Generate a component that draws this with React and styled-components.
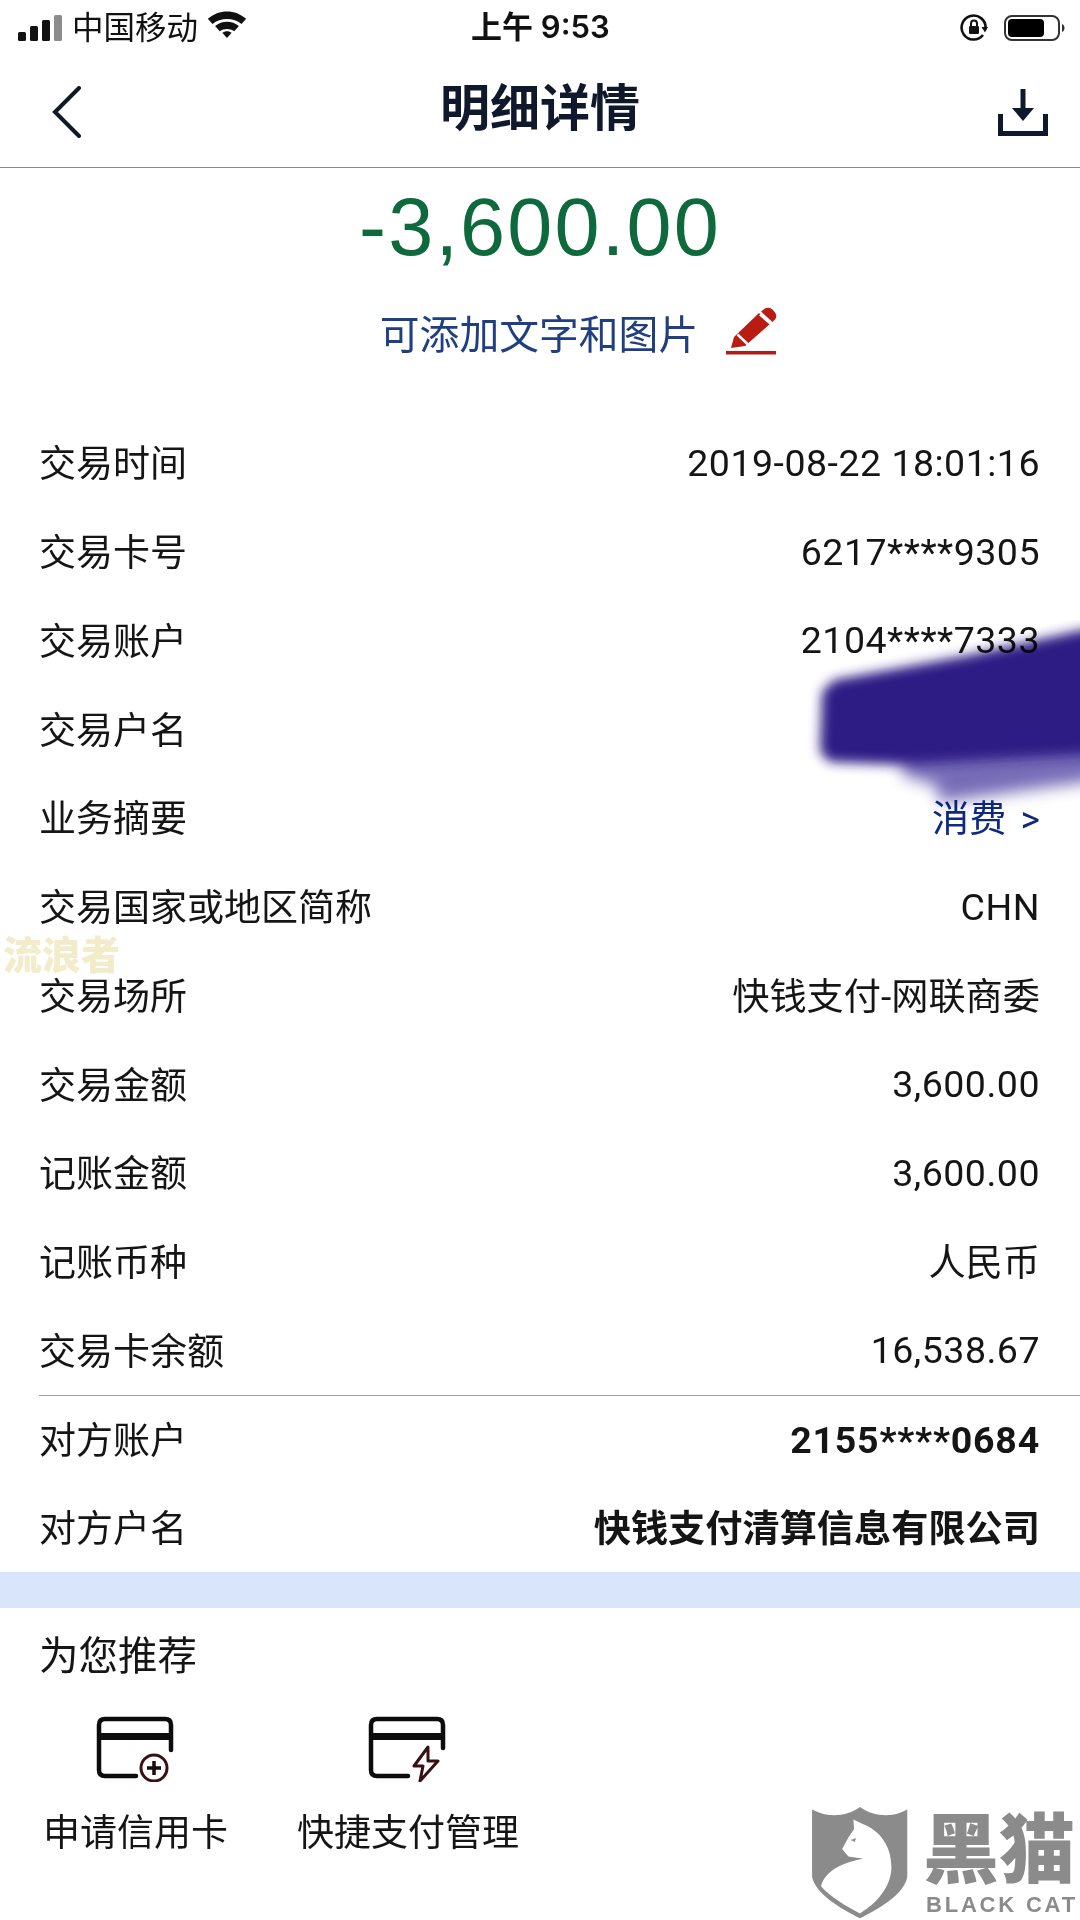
import styled, { createGlobalStyle } from "styled-components";

const GlobalStyle = createGlobalStyle`
  html, body {
    margin: 0;
    padding: 0;
    background: #fff;
  }
  body {
    font-family: "Inter", "Noto Sans CJK SC", sans-serif;
    color: #111;
  }
`;

const rows = [
  { label: "交易时间", value: "2019-08-22 18:01:16" },
  { label: "交易卡号", value: "6217****9305" },
  { label: "交易账户", value: "2104****7333" },
  { label: "交易户名", value: "" },
  { label: "业务摘要", value: "消费 >", kind: "link", cjk: true },
  { label: "交易国家或地区简称", value: "CHN" },
  { label: "交易场所", value: "快钱支付-网联商委", cjk: true },
  { label: "交易金额", value: "3,600.00" },
  { label: "记账金额", value: "3,600.00" },
  { label: "记账币种", value: "人民币", cjk: true },
  { label: "交易卡余额", value: "16,538.67" },
  { label: "对方账户", value: "2155****0684", kind: "strong", ruled: true },
  { label: "对方户名", value: "快钱支付清算信息有限公司", kind: "strong", cjk: true },
];

function SignalIcon() {
  return (
    <svg width="45" height="26" viewBox="0 0 45 26">
      <rect x="0" y="17" width="8" height="9" rx="1.5" fill="#111" />
      <rect x="12" y="11" width="8" height="15" rx="1.5" fill="#111" />
      <rect x="24" y="5" width="8" height="21" rx="1.5" fill="#111" />
      <rect x="36" y="0" width="8" height="26" rx="1.5" fill="#8c8c8c" />
    </svg>
  );
}

function WifiIcon() {
  return (
    <WifiSvg width="40" height="29" viewBox="0 0 38 28">
      <path d="M0.500 9.500C11 0 27 0 37.500 9.500L33 14.500C25.500 8 12.500 8 5 14.500Z" fill="#111" />
      <path d="M7.500 16.500C14 11 24 11 30.500 16.500L26 21.500C22 18.500 16 18.500 12 21.500Z" fill="#111" />
      <path d="M14.500 23C17 21 21 21 23.500 23L19 28Z" fill="#111" />
    </WifiSvg>
  );
}

function RotationLockIcon() {
  return (
    <svg width="28" height="28" viewBox="0 0 28 28">
      <path d="M23 21A12 12 0 1 1 25.600 14" fill="none" stroke="#111" strokeWidth="2.600" />
      <path d="M21.500 13H28L25 18.500Z" fill="#111" />
      <rect x="9" y="12" width="10" height="8" rx="1.200" fill="#111" />
      <path d="M11 12V9.500A3 3 0 0 1 17 9.500V12" fill="none" stroke="#111" strokeWidth="2" />
    </svg>
  );
}

function BatteryIcon() {
  return (
    <svg width="61" height="26" viewBox="0 0 61 26">
      <rect x="1" y="1" width="54" height="24" rx="7" fill="none" stroke="#333" strokeWidth="2" />
      <rect x="4" y="4" width="36" height="18" rx="4" fill="#000" />
      <path d="M58 9C60 10 60.500 11.500 60.500 13C60.500 14.500 60 16 58 17Z" fill="#333" />
    </svg>
  );
}

function BackIcon() {
  return (
    <svg width="30" height="52" viewBox="0 0 30 52">
      <path d="M27 2L3 26L27 50" fill="none" stroke="#10182c" strokeWidth="4" strokeLinecap="round" />
    </svg>
  );
}

function DownloadIcon() {
  return (
    <svg width="50" height="48" viewBox="0 0 50 48">
      <path d="M25 1V28" stroke="#10182c" strokeWidth="5" />
      <path d="M14 20L25 33L36 20Z" fill="#10182c" />
      <path d="M2.500 26V45.500H47.500V26" fill="none" stroke="#10182c" strokeWidth="5" />
    </svg>
  );
}

function PencilIcon() {
  return (
    <svg width="52" height="48" viewBox="0 0 52 48">
      <path d="M8 30L33 6L44 17L19 39L5 41Z" fill="#b81c12" />
      <path d="M37 3C40 0 44 0 47 3L49 5.500C51 8 50.500 11 48.500 13L46.500 15L35 4.500Z" fill="#b81c12" />
      <path d="M11.500 27.500L22.500 38" stroke="#fff" strokeWidth="2.500" />
      <path d="M34 7.500L45 17" stroke="#fff" strokeWidth="2.500" />
      <rect x="0" y="44" width="50" height="3.500" fill="#a8201a" />
    </svg>
  );
}

function CardAddIcon() {
  return (
    <svg width="80" height="66" viewBox="0 0 80 66">
      <path d="M75 34V9C75 5 73 3 69 3H9C5 3 3 5 3 9V54C3 58 5 60 9 60H40" fill="none" stroke="#0c0c0c" strokeWidth="4.500" strokeLinecap="round" />
      <rect x="3" y="17" width="72" height="7" fill="#0c0c0c" />
      <circle cx="58" cy="52" r="13" fill="none" stroke="#3a1014" strokeWidth="3" />
      <path d="M58 45V59M51 52H65" stroke="#1a0b0c" strokeWidth="3.500" />
    </svg>
  );
}

function CardBoltIcon() {
  return (
    <svg width="80" height="66" viewBox="0 0 80 66">
      <path d="M75 32V9C75 5 73 3 69 3H9C5 3 3 5 3 9V54C3 58 5 60 9 60H40" fill="none" stroke="#0c0c0c" strokeWidth="4.500" strokeLinecap="round" />
      <rect x="3" y="17" width="72" height="7" fill="#0c0c0c" />
      <path d="M60 31L46 50H55L52 65L70 45H60Z" fill="#fff" stroke="#3a1014" strokeWidth="3" strokeLinejoin="round" />
    </svg>
  );
}

function Smear() {
  return (
    <SmearLayer width="290" height="200" viewBox="0 0 290 200">
      <defs>
        <filter id="smearBlur" x="-20%" y="-20%" width="140%" height="140%">
          <feGaussianBlur stdDeviation="6" />
        </filter>
        <filter id="smearSoft" x="-20%" y="-40%" width="140%" height="180%">
          <feGaussianBlur stdDeviation="8" />
        </filter>
      </defs>
      <path d="M115 132L310 122V160L150 182L146 165L112 155Z" fill="#5f52aa" opacity="0.85" filter="url(#smearSoft)" />
      <path d="M44 60L175 36L310 6V135L115 145L40 142L30 132L32 72Z" fill="#2e1a85" filter="url(#smearBlur)" />
    </SmearLayer>
  );
}

function BlackCatLogo() {
  return (
    <LogoWrap>
      <svg width="100" height="114" viewBox="90 72 300 345">
        <path d="M95 85C125 105 190 115 240 78C290 115 355 105 383 85V290C375 340 300 385 240 415C180 385 105 340 95 290Z" fill="#8b8b8b" />
        <path d="M220 116L250 130C300 150 335 195 335 260C335 320 290 370 240 400C200 380 150 350 122 318C135 270 190 245 250 235L205 228L186 205L205 170L222 145Z" fill="#fff" />
        <path d="M212 178L228 172L224 184Z" fill="#8b8b8b" />
      </svg>
      <LogoText>
        <LogoName>黑猫</LogoName>
        <LogoLatin>BLACK CAT</LogoLatin>
      </LogoText>
    </LogoWrap>
  );
}

export default function App() {
  return (
    <Page>
      <GlobalStyle />
      <StatusBar>
        <StatusSide>
          <SignalIcon />
          <Carrier>中国移动</Carrier>
          <WifiIcon />
        </StatusSide>
        <StatusTime>上午 9:53</StatusTime>
        <StatusSide $right>
          <RotationLockIcon />
          <BatteryIcon />
        </StatusSide>
      </StatusBar>

      <NavBar>
        <BackIcon />
        <NavTitle>明细详情</NavTitle>
        <DownloadIcon />
      </NavBar>

      <Summary>
        <Amount>-3,600.00</Amount>
        <NoteRow>
          <NoteText>可添加文字和图片</NoteText>
          <PencilIcon />
        </NoteRow>
      </Summary>

      <DetailList>
        {rows.map((row) => (
          <DetailRow key={row.label} $ruled={row.ruled}>
            <RowLabel>{row.label}</RowLabel>
            <RowValue $kind={row.kind} $cjk={row.cjk}>
              {row.value}
            </RowValue>
          </DetailRow>
        ))}
      </DetailList>

      <Band />

      <Recommend>
        <RecommendTitle>为您推荐</RecommendTitle>
        <TileRow>
          <Tile>
            <CardAddIcon />
            <TileLabel>申请信用卡</TileLabel>
          </Tile>
          <Tile>
            <CardBoltIcon />
            <TileLabel>快捷支付管理</TileLabel>
          </Tile>
        </TileRow>
      </Recommend>

      <Smear />
      <Watermark>流浪者</Watermark>
      <BlackCatLogo />
    </Page>
  );
}

const Page = styled.div`
  position: relative;
  width: 1080px;
  height: 1920px;
  overflow: hidden;
  background: #fff;
  display: flex;
  flex-direction: column;
`;

const StatusBar = styled.div`
  height: 56px;
  padding: 0 15px 0 18px;
  box-sizing: border-box;
  display: flex;
  align-items: center;
  justify-content: space-between;
  position: relative;
`;

const StatusSide = styled.div`
  display: flex;
  align-items: center;
  gap: ${(p) => (p.$right ? "16px" : "9px")};
`;

const Carrier = styled.span`
  font-size: 31.5px;
  color: #111;
  margin-bottom: 7px;
`;

const WifiSvg = styled.svg`
  margin-bottom: 9px;
`;

const StatusTime = styled.span`
  position: absolute;
  left: 471px;
  top: 2px;
  font-size: 31px;
  font-weight: 600;
  color: #111;
`;

const NavBar = styled.div`
  height: 112px;
  box-sizing: border-box;
  padding: 0 32px 0 52px;
  border-bottom: 1.5px solid #8a8a8a;
  display: flex;
  align-items: center;
  justify-content: space-between;
`;

const NavTitle = styled.h1`
  margin: 0 0 15px;
  font-size: 50px;
  font-weight: 700;
  color: #10182c;
`;

const Summary = styled.div`
  height: 250.5px;
  display: flex;
  flex-direction: column;
  align-items: center;
`;

const Amount = styled.div`
  font-family: "Liberation Sans", sans-serif;
  font-size: 81px;
  letter-spacing: 2.2px;
  line-height: 118px;
  color: #0e6a3c;
`;

const NoteRow = styled.div`
  display: flex;
  align-items: center;
  gap: 28px;
  height: 90px;
  margin-left: 78px;
`;

const NoteText = styled.span`
  font-size: 39.8px;
  color: #1f3f80;
`;

const DetailList = styled.div`
  display: flex;
  flex-direction: column;
`;

const DetailRow = styled.div`
  height: 88.75px;
  box-sizing: border-box;
  margin-left: 39px;
  padding-right: 40px;
  display: flex;
  align-items: center;
  justify-content: space-between;
  border-top: ${(p) => (p.$ruled ? "1.5px solid #a0a0a0" : "none")};
`;

const RowLabel = styled.span`
  font-size: 37px;
  color: #151515;
  margin-bottom: 3px;
`;

const RowValue = styled.span`
  font-family: "Roboto", "Noto Sans CJK SC", sans-serif;
  font-size: ${(p) => (p.$cjk ? "37.2px" : "37.5px")};
  letter-spacing: ${(p) => (p.$cjk ? "0" : p.$kind === "strong" ? "0.8px" : "0.5px")};
  word-spacing: ${(p) => (p.$cjk ? "5px" : "0")};
  margin-bottom: ${(p) => (p.$cjk ? "3px" : "0")};
  color: ${(p) => (p.$kind === "link" ? "#0d2a80" : "#151515")};
  font-weight: ${(p) => (p.$kind === "strong" ? 700 : 400)};
`;

const Band = styled.div`
  height: 36px;
  background: #d8e5fb;
`;

const Recommend = styled.div`
  flex: 1;
  padding: 23px 0 0 39px;
  display: flex;
  flex-direction: column;
`;

const RecommendTitle = styled.div`
  font-size: 39.5px;
  line-height: 50px;
  color: #151515;
`;

const TileRow = styled.div`
  display: flex;
  gap: 69px;
  margin-top: 35px;
  margin-left: 4px;
`;

const Tile = styled.div`
  display: flex;
  flex-direction: column;
  align-items: center;
  gap: 26px;
`;

const TileLabel = styled.span`
  font-size: 37px;
  line-height: 50px;
  color: #151515;
`;

const SmearLayer = styled.svg`
  position: absolute;
  left: 790px;
  top: 620px;
  mix-blend-mode: multiply;
`;

const Watermark = styled.div`
  position: absolute;
  left: 3px;
  top: 930px;
  font-size: 39px;
  line-height: 50px;
  font-weight: 900;
  color: #f3eccb;
`;

const LogoWrap = styled.div`
  position: absolute;
  left: 810px;
  top: 1805px;
  display: flex;
  gap: 13px;
`;

const LogoText = styled.div`
  display: flex;
  flex-direction: column;
  align-items: flex-start;
`;

const LogoName = styled.div`
  font-size: 76px;
  line-height: 84px;
  margin-top: 2px;
  font-weight: 900;
  color: #8b8b8b;
  white-space: nowrap;
`;

const LogoLatin = styled.div`
  font-family: "Liberation Sans", sans-serif;
  font-size: 22px;
  line-height: 24px;
  margin: 2px 0 0 3px;
  font-weight: 700;
  letter-spacing: 2.8px;
  color: #8b8b8b;
  white-space: nowrap;
`;
